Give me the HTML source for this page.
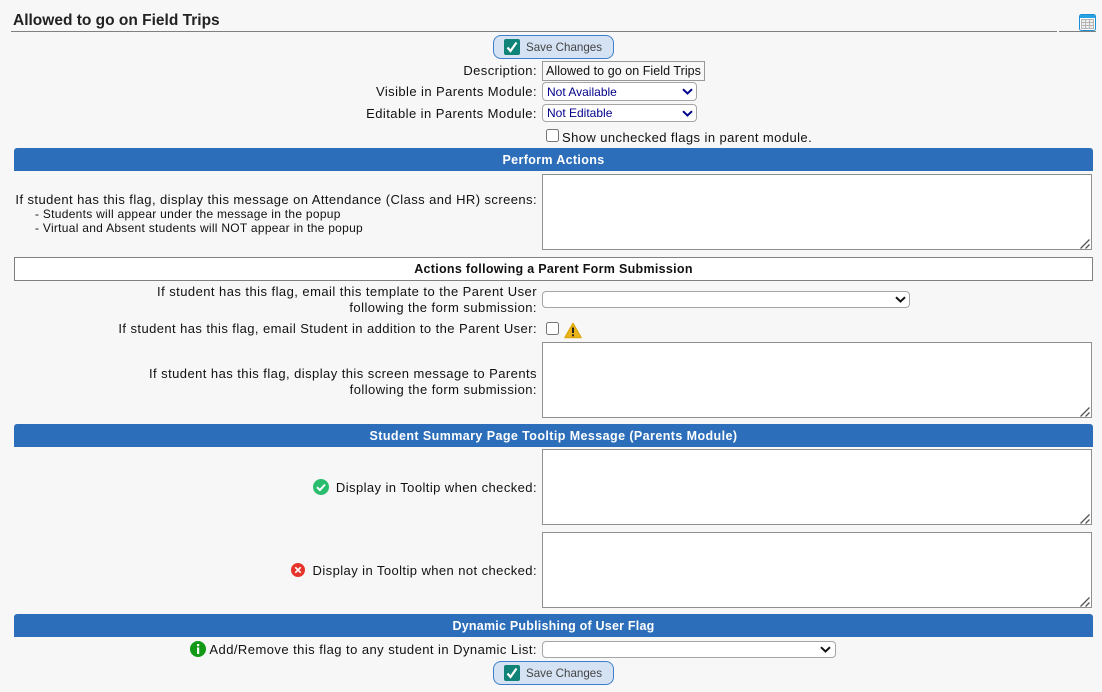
<!DOCTYPE html>
<html><head><meta charset="utf-8"><style>
html,body{margin:0;padding:0;width:1102px;height:692px;overflow:hidden;background:#f7f7f7}
body{position:relative;font-family:"Liberation Sans",sans-serif;font-size:13px;color:#111}
.a{position:absolute;box-sizing:border-box;margin:0}
.l{position:absolute;right:565px;text-align:right;white-space:nowrap;line-height:16px;letter-spacing:.42px}
.bar{position:absolute;left:14px;width:1079px;height:23px;background:#2c6eba;border-radius:3px 3px 0 0;color:#fff;font-weight:bold;font-size:12.5px;line-height:24px;text-align:center;letter-spacing:.35px}
textarea.a{left:542px;width:550px;height:76px;border:1px solid #8f8f8f;background:#fff;padding:2px;resize:none}
select.a{left:542px;appearance:none;-webkit-appearance:none;background:#fff;border:1px solid #a5a5a5;border-radius:4px;font:12px "Liberation Sans",sans-serif;color:#00008b;padding:0 0 0 4px}
.chev{position:absolute;width:11px;height:7px}
.rz{position:absolute;left:1080px;width:10px;height:10px}
.btn{position:absolute;left:493px;width:121px;height:24px;box-sizing:border-box;background:#d4e2f3;border:1px solid #3f7fc9;border-radius:8px;color:#444;font-size:11.6px;line-height:23px;padding-left:32px;white-space:nowrap}
.btn svg{position:absolute;left:10px;top:3px}
.cb{position:absolute;width:13px;height:13px;box-sizing:border-box;border:1px solid #767676;border-radius:2.5px;background:#fff}
</style></head><body>
<div class="a" style="left:13px;top:12px;font-size:15.5px;font-weight:bold;color:#222;line-height:18px;letter-spacing:0;white-space:nowrap">Allowed to go on Field Trips</div>
<div class="a" style="left:11px;top:31px;width:1046px;height:1px;background:#808080"></div>
<div class="a" style="left:1059px;top:31px;width:37px;height:1px;background:#808080"></div>
<svg class="a" style="left:1079px;top:14px" width="17" height="17" viewBox="0 0 17 17"><rect x=".5" y=".5" width="16" height="16" rx="2" fill="#fff" stroke="#1b8fd6"/><rect x="1" y="1" width="15" height="3" fill="#25a3e3"/><path d="M2.5 5.5h12v9h-12zM2.5 8.5h12M2.5 11.5h12M6.5 5.5v9M10.5 5.5v9" fill="#eee" stroke="#b5b5b5"/></svg>

<div class="btn" style="top:35px"><svg width="16" height="16" viewBox="0 0 16 16"><rect width="16" height="16" rx="2" fill="#0f8377"/><path d="M3.5 8.5l3 3.5 6-8.5" fill="none" stroke="#fff" stroke-width="2.2"/></svg>Save Changes</div>

<div class="l" style="top:63px">Description:</div>
<div class="a" style="left:542px;top:61px;width:163px;height:20px;border:1px solid #999;background:#f8f8f8;font-size:12.5px;line-height:18px;padding-left:3px;white-space:nowrap;letter-spacing:.05px">Allowed to go on Field Trips</div>
<div class="l" style="top:84px">Visible in Parents Module:</div>
<select class="a" style="top:82px;width:155px;height:19px"><option>Not Available</option></select>
<svg class="chev" style="left:682px;top:88px" viewBox="0 0 11 7"><path d="M1 1.2l4.5 4.3L10 1.2" fill="none" stroke="#00008b" stroke-width="2"/></svg>
<div class="l" style="top:106px;letter-spacing:.44px">Editable in Parents Module:</div>
<select class="a" style="top:104px;width:155px;height:18px"><option>Not Editable</option></select>
<svg class="chev" style="left:682px;top:110px" viewBox="0 0 11 7"><path d="M1 1.2l4.5 4.3L10 1.2" fill="none" stroke="#00008b" stroke-width="2"/></svg>
<div class="cb" style="left:546px;top:129px"></div>
<div class="a" style="left:562px;top:130px;line-height:16px;letter-spacing:.42px;white-space:nowrap">Show unchecked flags in parent module.</div>

<div class="bar" style="top:148px">Perform Actions</div>
<div class="l" style="top:192px">If student has this flag, display this message on Attendance (Class and HR) screens:</div>
<div class="a" style="left:35px;top:207px;font-size:12px;line-height:14px;letter-spacing:.28px;white-space:nowrap">- Students will appear under the message in the popup<br>- Virtual and Absent students will NOT appear in the popup</div>
<textarea class="a" style="top:174px"></textarea>
<svg class="rz" style="top:239px" viewBox="0 0 10 10"><path d="M.5 9.5L9.5.5M5.5 9.5l4-4" stroke="#555" stroke-width="1.3"/></svg>

<div class="a" style="left:14px;top:257px;width:1079px;height:24px;background:#fff;border:1px solid #808080;font-weight:bold;font-size:12.5px;line-height:22px;text-align:center;letter-spacing:.3px">Actions following a Parent Form Submission</div>

<div class="l" style="top:284px;letter-spacing:.45px">If student has this flag, email this template to the Parent User<br>following the form submission:</div>
<select class="a" style="top:291px;width:368px;height:17px;color:#111"><option></option></select>
<svg class="chev" style="left:895px;top:296px" viewBox="0 0 11 7"><path d="M1 1.2l4.5 4.3L10 1.2" fill="none" stroke="#111" stroke-width="2"/></svg>
<div class="l" style="top:321px">If student has this flag, email Student in addition to the Parent User:</div>
<div class="cb" style="left:546px;top:322px"></div>
<svg class="a" style="left:564px;top:322px" width="18" height="17" viewBox="0 0 18 17"><path d="M9 1.5L17 15.5H1z" fill="#eab51c" stroke="#e0a90f" stroke-linejoin="round" stroke-width="1.5"/><path d="M9 5.5v5.5" stroke="#222" stroke-width="2"/><rect x="8" y="12.3" width="2" height="2" fill="#222"/></svg>
<div class="l" style="top:366px;letter-spacing:.44px">If student has this flag, display this screen message to Parents<br>following the form submission:</div>
<textarea class="a" style="top:342px"></textarea>
<svg class="rz" style="top:407px" viewBox="0 0 10 10"><path d="M.5 9.5L9.5.5M5.5 9.5l4-4" stroke="#555" stroke-width="1.3"/></svg>

<div class="bar" style="top:424px;letter-spacing:.42px">Student Summary Page Tooltip Message (Parents Module)</div>
<svg class="a" style="left:313px;top:479px" width="16" height="16" viewBox="0 0 16 16"><circle cx="8" cy="8" r="8" fill="#2bbd6e"/><path d="M4 8.2l2.9 2.9L12 5.6" fill="none" stroke="#fff" stroke-width="2"/></svg>
<div class="l" style="top:480px">Display in Tooltip when checked:</div>
<textarea class="a" style="top:449px"></textarea>
<svg class="rz" style="top:514px" viewBox="0 0 10 10"><path d="M.5 9.5L9.5.5M5.5 9.5l4-4" stroke="#555" stroke-width="1.3"/></svg>
<svg class="a" style="left:291px;top:563px" width="14" height="14" viewBox="0 0 14 14"><circle cx="7" cy="7" r="7" fill="#e5352b"/><path d="M4.3 4.3l5.4 5.4M9.7 4.3l-5.4 5.4" stroke="#fff" stroke-width="1.7"/></svg>
<div class="l" style="top:563px">Display in Tooltip when not checked:</div>
<textarea class="a" style="top:532px"></textarea>
<svg class="rz" style="top:597px" viewBox="0 0 10 10"><path d="M.5 9.5L9.5.5M5.5 9.5l4-4" stroke="#555" stroke-width="1.3"/></svg>

<div class="bar" style="top:614px;letter-spacing:.22px">Dynamic Publishing of User Flag</div>
<svg class="a" style="left:190px;top:641px" width="16" height="16" viewBox="0 0 16 16"><circle cx="8" cy="8" r="8" fill="#129a16"/><rect x="7" y="3" width="2.2" height="2.2" fill="#fff"/><rect x="7" y="6.5" width="2.2" height="6.5" fill="#fff"/></svg>
<div class="l" style="top:642px;letter-spacing:.45px">Add/Remove this flag to any student in Dynamic List:</div>
<select class="a" style="top:641px;width:294px;height:17px;color:#111"><option></option></select>
<svg class="chev" style="left:820px;top:646px" viewBox="0 0 11 7"><path d="M1 1.2l4.5 4.3L10 1.2" fill="none" stroke="#111" stroke-width="2"/></svg>
<div class="btn" style="top:661px"><svg width="16" height="16" viewBox="0 0 16 16"><rect width="16" height="16" rx="2" fill="#0f8377"/><path d="M3.5 8.5l3 3.5 6-8.5" fill="none" stroke="#fff" stroke-width="2.2"/></svg>Save Changes</div>
</body></html>
